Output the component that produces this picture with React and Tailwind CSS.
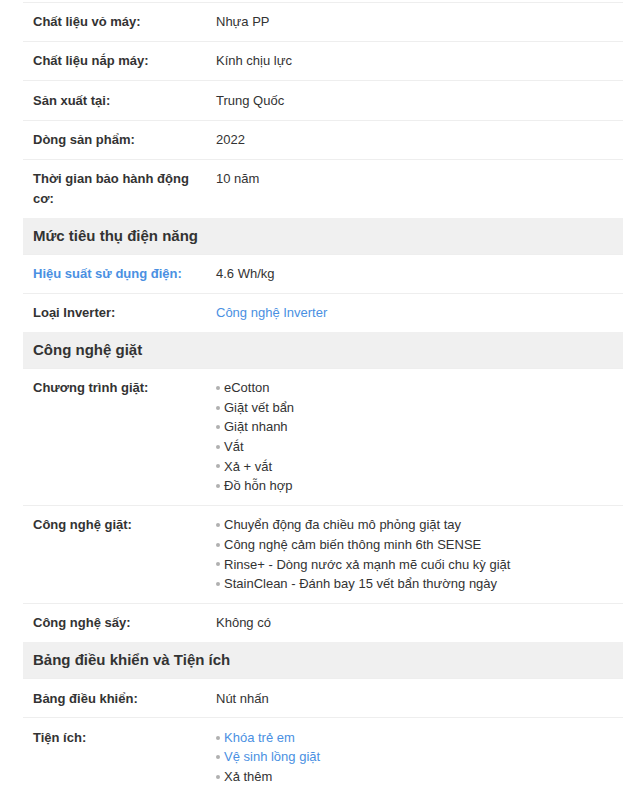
import React from 'react';

const LINK = 'text-[#4a90e2]';

const rows = [
  { type: 'row', label: 'Chất liệu vỏ máy:', value: 'Nhựa PP' },
  { type: 'row', label: 'Chất liệu nắp máy:', value: 'Kính chịu lực' },
  { type: 'row', label: 'Sản xuất tại:', value: 'Trung Quốc' },
  { type: 'row', label: 'Dòng sản phẩm:', value: '2022' },
  { type: 'row', label: 'Thời gian bảo hành động cơ:', value: '10 năm' },
  { type: 'head', label: 'Mức tiêu thụ điện năng' },
  { type: 'row', label: 'Hiệu suất sử dụng điện:', value: '4.6 Wh/kg', labelLink: true },
  { type: 'row', label: 'Loại Inverter:', value: 'Công nghệ Inverter', valueLink: true },
  { type: 'head', label: 'Công nghệ giặt' },
  {
    type: 'row', label: 'Chương trình giặt:',
    list: [['eCotton'], ['Giặt vết bẩn'], ['Giặt nhanh'], ['Vắt'], ['Xả + vắt'], ['Đồ hỗn hợp']],
  },
  {
    type: 'row', label: 'Công nghệ giặt:',
    list: [
      ['Chuyển động đa chiều mô phỏng giặt tay'],
      ['Công nghệ cảm biến thông minh 6th SENSE'],
      ['Rinse+ - Dòng nước xả mạnh mẽ cuối chu kỳ giặt'],
      ['StainClean - Đánh bay 15 vết bẩn thường ngày'],
    ],
  },
  { type: 'row', label: 'Công nghệ sấy:', value: 'Không có' },
  { type: 'head', label: 'Bảng điều khiển và Tiện ích' },
  { type: 'row', label: 'Bảng điều khiển:', value: 'Nút nhấn' },
  {
    type: 'row', label: 'Tiện ích:', last: true,
    list: [['Khóa trẻ em', true], ['Vệ sinh lồng giặt', true], ['Xả thêm']],
  },
];

const Row = ({ r }) => (
  <div className="flex border-t border-[#eeeeee]">
    <div className={`w-[183px] shrink-0 px-[10px] py-[9.3px] font-bold ${r.labelLink ? LINK : 'text-[#333333]'}`}>
      {r.label}
    </div>
    <div className="flex-1 px-[10px] py-[9.3px] text-[#333333]">
      {r.list ? (
        <ul>
          {r.list.map(([t, link]) => (
            <li key={t} className="flex items-center">
              <span className="w-[4px] h-[4px] rounded-full bg-[#b0b0b0] mr-[4px] shrink-0" />
              <span className={link ? LINK : ''}>{t}</span>
            </li>
          ))}
        </ul>
      ) : (
        <span className={r.valueLink ? LINK : ''}>{r.value}</span>
      )}
    </div>
  </div>
);

export default function App() {
  return (
    <div className="bg-white min-h-screen pt-[2px] pl-[23px] pr-[4px]" style={{ fontFamily: '"Liberation Sans", Arial, sans-serif' }}>
      <div className="text-[13px] leading-[19.6px]">
        {rows.map((r, i) =>
          r.type === 'head' ? (
            <div key={i} className="bg-[#f0f0f0] px-[10px] py-[7px] text-[15px] leading-[22px] font-bold text-[#333333]">
              {r.label}
            </div>
          ) : (
            <Row key={i} r={r} />
          )
        )}
      </div>
    </div>
  );
}
